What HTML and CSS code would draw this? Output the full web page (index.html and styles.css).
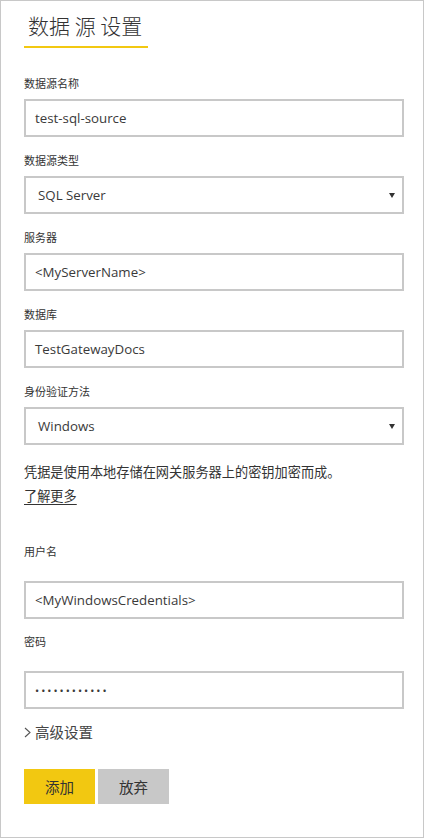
FILE: index.html
```html
<!DOCTYPE html>
<html lang="zh-CN">
<head>
<meta charset="utf-8">
<title>数据源设置</title>
<link rel="stylesheet" href="styles.css">
</head>
<body>
<div class="panel">
  <div class="head"><h1 class="title">数据 源 设置</h1></div>

  <div class="field">
    <div class="label">数据源名称</div>
    <div class="input">test-sql-source</div>
  </div>
  <div class="field">
    <div class="label">数据源类型</div>
    <div class="input select">SQL Server<span class="caret"></span></div>
  </div>
  <div class="field">
    <div class="label">服务器</div>
    <div class="input">&lt;MyServerName&gt;</div>
  </div>
  <div class="field">
    <div class="label">数据库</div>
    <div class="input">TestGatewayDocs</div>
  </div>
  <div class="field">
    <div class="label">身份验证方法</div>
    <div class="input select">Windows<span class="caret"></span></div>
  </div>

  <p class="note">凭据是使用本地存储在网关服务器上的密钥加密而成。</p>
  <a class="more" href="#">了解更多</a>

  <div class="creds">
    <div class="field wide">
      <div class="label">用户名</div>
      <div class="input">&lt;MyWindowsCredentials&gt;</div>
    </div>
    <div class="field wide">
      <div class="label">密码</div>
      <div class="input pwd">••••••••••••</div>
    </div>
  </div>

  <div class="advanced">
    <svg class="chev" width="7" height="11" viewBox="0 0 7 11"><path d="M1 1 L6 5.5 L1 10" fill="none" stroke="#555" stroke-width="1.1"/></svg>
    <span>高级设置</span>
  </div>

  <div class="actions">
    <button class="btn primary">添加</button>
    <button class="btn secondary">放弃</button>
  </div>
</div>
</body>
</html>
```

FILE: styles.css
```css
html, body {
  margin: 0;
  padding: 0;
  background: #fff;
}

body {
  font-family: "Open Sans", "Noto Sans CJK SC", sans-serif;
  color: #333;
}

.panel {
  width: 424px;
  height: 838px;
  box-sizing: border-box;
  border: 1px solid #c8c8c8;
  padding: 0 19px 0 23px;
  display: flex;
  flex-direction: column;
}

.head {
  margin-bottom: 27px;
}

.title {
  display: inline-block;
  margin: 0;
  font-family: "Noto Sans CJK SC", sans-serif;
  font-weight: 300;
  font-size: 21px;
  line-height: 30px;
  color: #333;
  padding: 9px 6px 6px 4px;
  border-bottom: 2px solid #f2c811;
}

.field {
  display: flex;
  flex-direction: column;
  gap: 8px;
  margin-bottom: 15px;
}

.field.wide {
  gap: 22px;
  margin-bottom: 14px;
}

.label {
  font-family: "Noto Sans CJK SC", sans-serif;
  font-size: 11px;
  line-height: 16px;
  color: #333;
}

.input {
  height: 38px;
  box-sizing: border-box;
  border: 2px solid #c8c8c8;
  padding: 0 9px;
  font-size: 13.3px;
  display: flex;
  align-items: center;
  color: #3a3a3a;
}

.select {
  justify-content: space-between;
  padding-left: 12px;
  padding-right: 7px;
}

.caret {
  width: 0;
  height: 0;
  border-left: 3px solid transparent;
  border-right: 3px solid transparent;
  border-top: 5px solid #333;
}

.pwd {
  font-size: 11px;
  letter-spacing: 2px;
}

.note {
  margin: 0;
  font-family: "Noto Sans CJK SC", sans-serif;
  font-size: 13.2px;
  line-height: 24px;
  color: #333;
}

.more {
  align-self: flex-start;
  font-family: "Noto Sans CJK SC", sans-serif;
  font-size: 13.2px;
  line-height: 24px;
  color: #333;
  text-decoration: underline;
  text-underline-offset: 3px;
}

.creds {
  margin-top: 35px;
}

.advanced {
  margin-top: -3px;
  display: flex;
  align-items: center;
  gap: 4px;
  font-family: "Noto Sans CJK SC", sans-serif;
  font-size: 14.5px;
  line-height: 24px;
  color: #444;
}

.actions {
  margin-top: 25px;
  display: flex;
  gap: 3px;
}

.btn {
  width: 71px;
  height: 35px;
  border: 0;
  padding: 0;
  font-family: "Noto Sans CJK SC", sans-serif;
  font-size: 14.5px;
  color: #333;
}

.primary {
  background: #f2c811;
}

.secondary {
  background: #c8c8c8;
}
```
